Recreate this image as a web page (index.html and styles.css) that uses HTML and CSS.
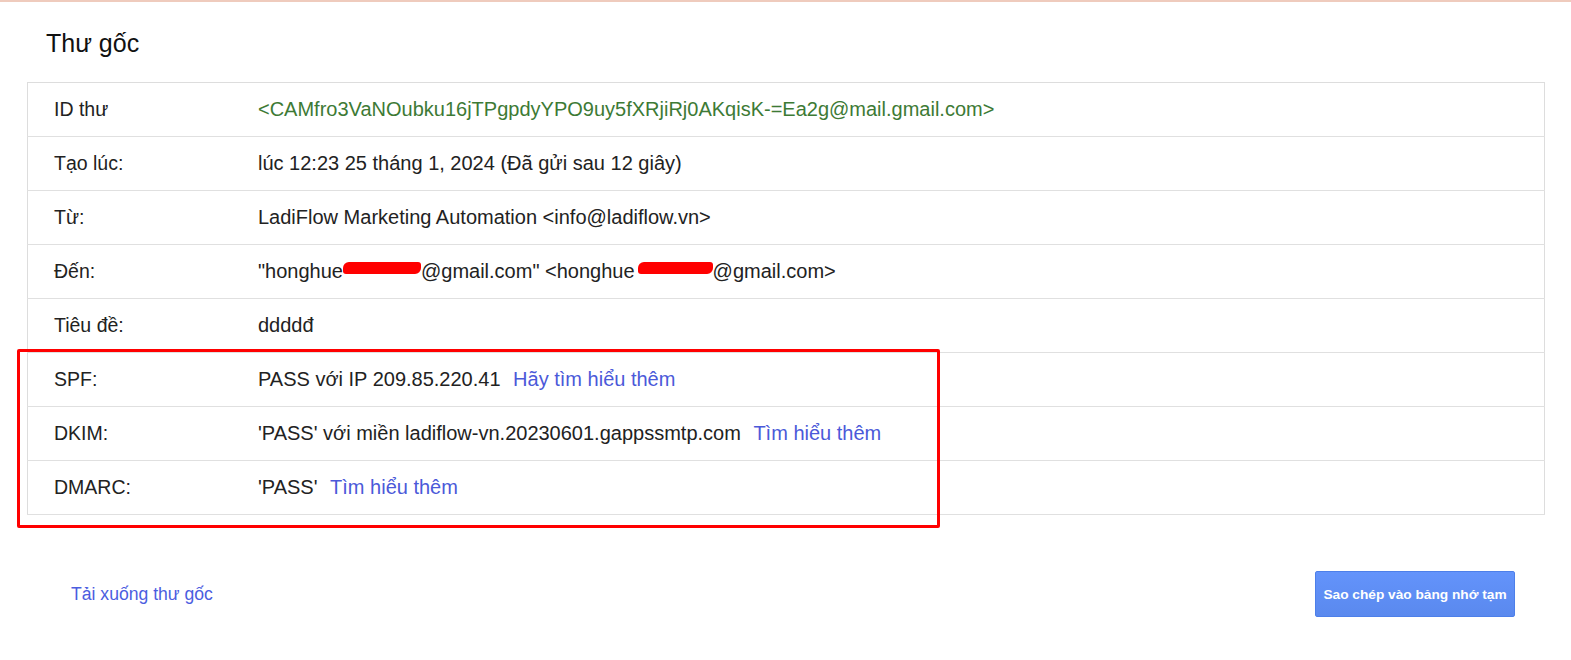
FILE: index.html
```html
<!DOCTYPE html>
<html lang="vi">
<head>
<meta charset="utf-8">
<title>Thư gốc</title>
<link rel="stylesheet" href="styles.css">
</head>
<body>
<div class="topline"></div>
<main class="page">
  <h1 class="title">Thư gốc</h1>
  <div class="table-wrap">
    <table class="info">
      <tbody>
        <tr><td class="label">ID thư</td><td class="value id">&lt;CAMfro3VaNOubku16jTPgpdyYPO9uy5fXRjiRj0AKqisK-=Ea2g@mail.gmail.com&gt;</td></tr>
        <tr><td class="label">Tạo lúc:</td><td class="value">lúc 12:23 25 tháng 1, 2024 (Đã gửi sau 12 giây)</td></tr>
        <tr><td class="label">Từ:</td><td class="value">LadiFlow Marketing Automation &lt;info@ladiflow.vn&gt;</td></tr>
        <tr><td class="label">Đến:</td><td class="value">"honghue<span class="redact r1"></span>@gmail.com" &lt;honghue<span class="redact r2"></span>@gmail.com&gt;</td></tr>
        <tr><td class="label">Tiêu đề:</td><td class="value">ddddđ</td></tr>
        <tr><td class="label">SPF:</td><td class="value">PASS với IP 209.85.220.41 <a class="link" href="#">Hãy tìm hiểu thêm</a></td></tr>
        <tr><td class="label">DKIM:</td><td class="value">'PASS' với miền ladiflow-vn.20230601.gappssmtp.com <a class="link" href="#">Tìm hiểu thêm</a></td></tr>
        <tr><td class="label">DMARC:</td><td class="value">'PASS' <a class="link" href="#">Tìm hiểu thêm</a></td></tr>
      </tbody>
    </table>
    <div class="highlight"></div>
  </div>
  <div class="actions">
    <a class="download" href="#">Tải xuống thư gốc</a>
    <button class="copy" type="button">Sao chép vào bảng nhớ tạm</button>
  </div>
</main>
</body>
</html>
```
FILE: styles.css
```css
html, body {
  margin: 0;
  padding: 0;
  background: #ffffff;
}
body {
  font-family: "Liberation Sans", Arial, sans-serif;
  color: #222222;
}
.topline {
  height: 2px;
  background: #efcbbd;
}
.page {
  padding: 0 26px 0 27px;
}
.title {
  margin: 0;
  padding: 27px 0 0 19px;
  height: 80px;
  box-sizing: border-box;
  font-size: 25px;
  font-weight: normal;
  color: #111111;
  line-height: 28px;
}
.table-wrap {
  position: relative;
}
.info {
  width: 100%;
  border-collapse: collapse;
  border: 1px solid #dddddd;
}
.info td {
  height: 53px;
  padding: 0;
  border-bottom: 1px solid #e0e0e0;
  font-size: 20px;
  vertical-align: middle;
  white-space: nowrap;
}
.info td.label {
  width: 204px;
  padding-left: 26px;
  color: #222222;
  font-size: 19.5px;
}
.info td.value {
  color: #222222;
}
.info td.id {
  color: #3d7a35;
}
.link {
  color: #4b59d9;
  text-decoration: none;
  margin-left: 7px;
}
.redact {
  display: inline-block;
  height: 12px;
  background: #ff0000;
  border-radius: 6px 3px 6px 3px;
  vertical-align: 4px;
}
.r1 { width: 78px; margin: 0; }
.r2 { width: 75px; margin: 0 0 0 3px; }
.highlight {
  position: absolute;
  left: -10px;
  top: 267px;
  width: 917px;
  height: 173px;
  border: 3px solid #ff0000;
  border-radius: 2px;
  pointer-events: none;
}
.actions {
  display: flex;
  justify-content: space-between;
  align-items: center;
  padding: 56px 30px 0 44px;
}
.download {
  color: #4b5ddf;
  text-decoration: none;
  font-size: 17.6px;
}
.copy {
  width: 200px;
  height: 46px;
  border: 1px solid #4d7fe9;
  border-radius: 2px;
  background: linear-gradient(#6393fb, #5a89ee);
  color: #ffffff;
  font-family: "Liberation Sans", Arial, sans-serif;
  font-weight: bold;
  font-size: 13.7px;
  padding: 0;
}
```
